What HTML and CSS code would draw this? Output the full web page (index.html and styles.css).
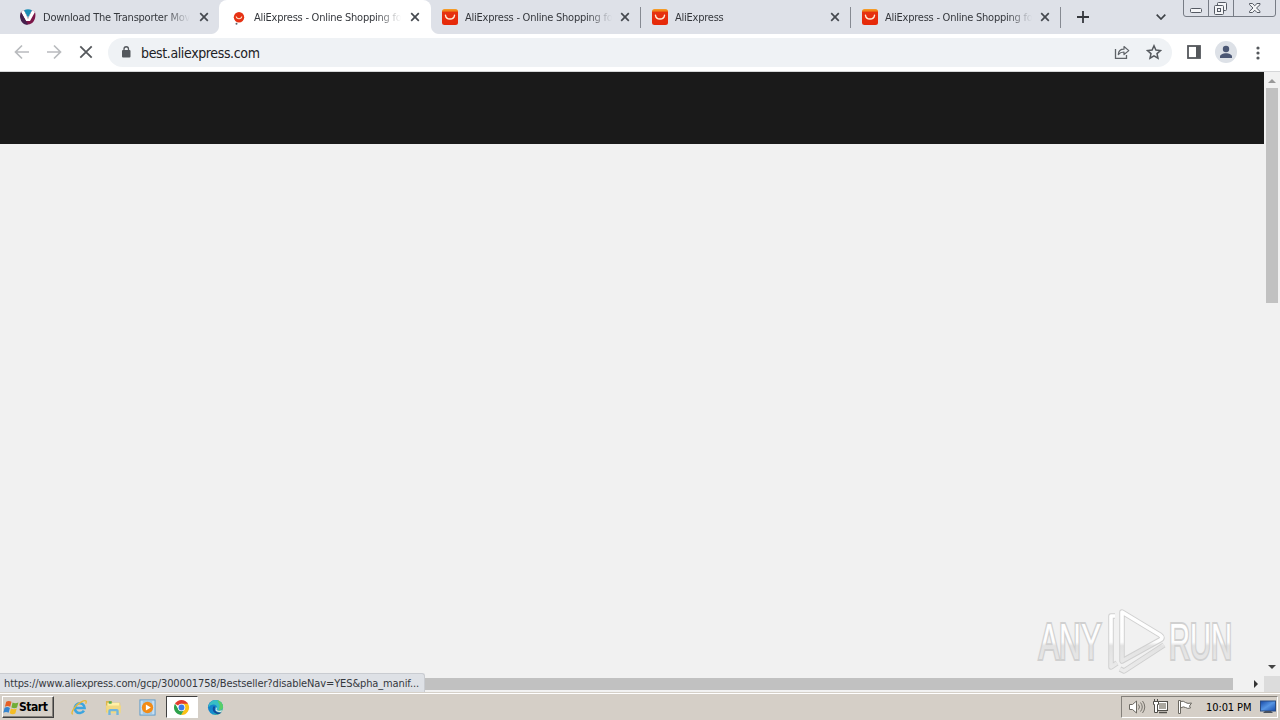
FILE: index.html
```html
<!DOCTYPE html>
<html lang="en">
<head>
  <meta charset="UTF-8">
  <title>AliExpress - Online Shopping</title>
  <link rel="stylesheet" href="styles.css">
</head>
<body>
  <svg width="0" height="0" class="defs">
    <defs>
      <linearGradient id="aliRed" x2="0" y2="1"><stop offset="0" stop-color="#f7a52a"/><stop offset=".14" stop-color="#ee7416"/><stop offset=".2" stop-color="#e63210"/><stop offset="1" stop-color="#e62808"/></linearGradient>
      <linearGradient id="edge" x2="1" y2="1"><stop offset="0" stop-color="#1473c6"/><stop offset=".6" stop-color="#1290d0"/><stop offset="1" stop-color="#56cf65"/></linearGradient>
      <linearGradient id="screen" x2="1" y2="1"><stop offset="0" stop-color="#1547a5"/><stop offset=".5" stop-color="#5796e4"/><stop offset="1" stop-color="#174bab"/></linearGradient>
      <linearGradient id="mark" gradientUnits="userSpaceOnUse" x1="0" y1="5" x2="0" y2="65"><stop offset="0" stop-color="#fff"/><stop offset=".52" stop-color="#fdfdfd"/><stop offset=".58" stop-color="#e2e2e2"/><stop offset="1" stop-color="#ebebeb"/></linearGradient>
      <symbol id="ali" viewBox="0 0 16 16"><rect width="16" height="16" rx="2.5" fill="url(#aliRed)"/><path d="M3.500 6.300c.8 5 8.200 5 9 0" fill="none" stroke="#fff0dc" stroke-width="1.400" stroke-linecap="round"/></symbol>
      <symbol id="x" viewBox="0 0 10 10"><path d="M1.200 1.200l7.600 7.600M8.800 1.200L1.200 8.800" stroke="#45494f" stroke-width="1.700"/></symbol>
    </defs>
  </svg>

  <div class="tabs">
    <div class="tab first">
      <svg class="fav" viewBox="0 0 16 16"><path d="M1 3C-.5 8 2 15.500 8 15.500S16.500 8 15 3L12 1 8 10 4 1z" fill="#7b1648"/><path d="M1 3l3-2 4 9 4-9 3 2-5 9H6z" fill="#fff"/><path d="M4 1.300Q8-1 12 1.300L8 8.500z" fill="#1b8db5"/><path d="M1 3L0 7q0 5 4 8 2 1 4 .5L6 12z" fill="#45204d"/></svg>
      <span class="title">Download The Transporter Mov</span>
      <svg class="close"><use href="#x"/></svg>
    </div>
    <div class="tab active">
      <svg class="fav" viewBox="0 0 16 16"><circle cx="8" cy="8.300" r="5.200" fill="#e63214"/><path d="M5.200 7.500c.5 3 5.100 3 5.600 0" fill="none" stroke="#ffe3c8" stroke-width="1.100"/><circle cx="5.500" cy="14.800" r="1" fill="#59636e"/></svg>
      <span class="title">AliExpress - Online Shopping fo</span>
      <svg class="close"><use href="#x"/></svg>
    </div>
    <div class="tab sep after">
      <svg class="fav"><use href="#ali"/></svg>
      <span class="title">AliExpress - Online Shopping fo</span>
      <svg class="close"><use href="#x"/></svg>
    </div>
    <div class="tab sep">
      <svg class="fav"><use href="#ali"/></svg>
      <span class="title">AliExpress</span>
      <svg class="close"><use href="#x"/></svg>
    </div>
    <div class="tab sep">
      <svg class="fav"><use href="#ali"/></svg>
      <span class="title">AliExpress - Online Shopping fo</span>
      <svg class="close"><use href="#x"/></svg>
    </div>
    <svg class="plus" viewBox="0 0 12 12"><path d="M6 0v12M0 6h12" stroke="#35383d" stroke-width="1.800"/></svg>
    <svg class="chevron" viewBox="0 0 10 6"><path d="M.7.700L5 5 9.300.7" fill="none" stroke="#3e4247" stroke-width="1.700"/></svg>
    <svg class="winbtns" viewBox="0 0 94 17">
      <path d="M.5 0v14q0 2.500 2.500 2.500h87q2.500 0 2.500-2.500V0M25.500 0v16.500M50.500 0v16.500" fill="none" stroke="#777c85"/>
      <g fill="#f4f5f7" stroke="#555a63">
        <rect x="7.500" y="8.500" width="11" height="4" rx="1"/>
        <rect x="34.500" y="2.500" width="9" height="8" rx="1"/>
        <rect x="31.500" y="5.500" width="9" height="9" rx="1"/>
        <rect x="34.500" y="8.500" width="3" height="3"/>
        <path d="M66.500 3.500h3l2.200 2.300 2.300-2.300h3v1.200L73.500 8l3.500 3.300v1.200h-3l-2.300-2.300-2.200 2.300h-3v-1.200L70 8l-3.500-3.300z"/>
      </g>
    </svg>
  </div>

  <div class="toolbar">
    <svg class="nav" viewBox="0 0 16 16"><path d="M15 8H2M8 1.500L1.500 8 8 14.500" fill="none" stroke="#b9bbbe" stroke-width="1.700"/></svg>
    <svg class="nav" viewBox="0 0 16 16"><path d="M1 8h13M8 1.500L14.500 8 8 14.500" fill="none" stroke="#b9bbbe" stroke-width="1.700"/></svg>
    <svg class="nav" viewBox="0 0 16 16"><path d="M2.300 2.300l11.400 11.400M13.700 2.300L2.300 13.700" stroke="#55585c" stroke-width="1.800"/></svg>
    <div class="omnibox">
      <svg class="lock" viewBox="0 0 10 12"><rect x="1" y="4" width="8.500" height="7.500" rx="1" fill="#54585d"/><path d="M3 4.500V3a2.250 2.250 0 0 1 4.500 0v1.500" fill="none" stroke="#54585d" stroke-width="1.300"/></svg>
      <span class="url">best.aliexpress.com</span>
      <svg class="share" viewBox="0 0 16 14"><path d="M1.500 4v9.300h11V10" fill="none" stroke="#5f6368" stroke-width="1.300"/><path d="M4.300 9.500C4.500 6 7 4.200 10 4.200V1.500L14.800 5.600 10 9.500V7C7.500 7 5.800 7.700 4.300 9.500z" fill="none" stroke="#5f6368" stroke-width="1.200" stroke-linejoin="round"/></svg>
      <svg class="star" viewBox="0 0 16 16"><path d="M8 1.800l1.900 4.300 4.600.4-3.500 3.100 1 4.600L8 11.800l-4 2.400 1-4.600L1.500 6.500l4.600-.4z" fill="none" stroke="#55595e" stroke-width="1.500"/></svg>
    </div>
    <svg class="panel" viewBox="0 0 14 14"><rect x="1" y="1" width="12" height="12" fill="#fff" stroke="#54575b" stroke-width="1.800"/><path d="M9 1h4v12H9z" fill="#54575b"/></svg>
    <svg class="avatar" viewBox="0 0 22 22"><circle cx="11" cy="11" r="11" fill="#dde1e7"/><circle cx="11" cy="8" r="3.200" fill="#4b5774"/><path d="M5 17v-1.500c0-2 3-3.300 6-3.300s6 1.300 6 3.300V17z" fill="#4b5774"/></svg>
    <svg class="dots" viewBox="0 0 4 14"><g fill="#55585c"><circle cx="2" cy="2" r="1.600"/><circle cx="2" cy="7" r="1.600"/><circle cx="2" cy="12" r="1.600"/></g></svg>
  </div>

  <div class="page">
    <div class="content">
      <div class="header"></div>
      <svg class="watermark" viewBox="0 0 210 70">
        <g fill="none" stroke="#d0d0d0" stroke-width="5.500" stroke-linejoin="round">
          <path d="M92 6l38 23q4 3 0 5L92 55z"/><path d="M85 10h-4v51l6-4M90 63l4 2 40-26"/>
        </g>
        <g fill="none" stroke="url(#mark)" stroke-width="3.600" stroke-linejoin="round">
          <path d="M92 6l38 23q4 3 0 5L92 55z"/><path d="M85 10h-4v51l6-4M90 63l4 2 40-26"/>
        </g>
        <text class="mark" x="9" y="53" textLength="62" lengthAdjust="spacingAndGlyphs">ANY</text>
        <text class="mark" x="139" y="53" textLength="63" lengthAdjust="spacingAndGlyphs">RUN</text>
      </svg>
      <div class="status">https://www.aliexpress.com/gcp/300001758/Bestseller?disableNav=YES&amp;pha_manif...</div>
    </div>
    <div class="vbar">
      <svg viewBox="0 0 16 16"><path d="M4 11l4-4 4 4z" fill="#999"/></svg>
      <div class="vthumb"></div>
      <svg class="down" viewBox="0 0 16 16"><path d="M4 5l4 4 4-4z" fill="#444"/></svg>
    </div>
    <div class="hbar">
      <div class="hthumb"></div>
      <svg viewBox="0 0 16 16"><path d="M6 4l4 4-4 4z" fill="#333"/></svg>
    </div>
    <div class="corner"></div>
  </div>

  <div class="taskbar">
    <div class="start">
      <svg viewBox="0 0 16 14"><path d="M3 1.500q2.500-1.500 5 .2L6.800 6.300q-2.500-1.500-5 0z" fill="#e66026"/><path d="M9 2.300q2.500 1.500 5.500 0L13.200 7q-2.500 1.400-5.300-.1z" fill="#71ad35"/><path d="M1.500 7.300q2.500-1.500 5 .1L5.300 12Q3 10.500.3 12z" fill="#3685cf"/><path d="M7.500 8q2.500 1.500 5.400 0l-1.300 4.700q-2.600 1.400-5.300-.2z" fill="#f5bd25"/></svg>
      Start
    </div>
    <div class="quick">
      <svg viewBox="0 0 18 18"><path d="M13.700 12.300A5.200 5.200 0 1 1 14.400 9.500H5" fill="none" stroke="#3ca5df" stroke-width="2.700"/><path d="M2 15.500C-1 17 3 7 11 3c5-2.500 6-1 4.500 2" fill="none" stroke="#e8b936" stroke-width="1.400"/></svg>
    </div>
    <div class="quick">
      <svg viewBox="0 0 18 18"><path d="M1 2h6l1 2h8v10H1z" fill="#dcb64d"/><path d="M2.500 4h13v7h-13z" fill="#fff0a8"/><path d="M4 2.500h3V5H4z" fill="#49ad58"/><path d="M1 7h16l-.5 8h-15z" fill="#f2d982"/><path d="M3.500 17v-4.500q0-2 2-2h7q2 0 2 2V17H12v-4H6v4z" fill="#70b5de"/></svg>
    </div>
    <div class="quick">
      <svg viewBox="0 0 18 18"><rect x="1" y="1" width="16" height="16" fill="#c9def0" stroke="#5a9acb"/><rect x="4" y="2" width="10" height="14" fill="#a5cae5"/><circle cx="9" cy="9" r="6" fill="#f28b16"/><path d="M7.300 5.700L12.500 9l-5.200 3.300z" fill="#fff"/></svg>
    </div>
    <div class="quick pressed">
      <svg viewBox="0 0 18 18"><path d="M9 9L2.100 5A8 8 0 0 1 15.900 5z" fill="#e33b2e"/><path d="M15.900 5A8 8 0 0 1 8.500 17L12 10 9 5z" fill="#fbc116"/><path d="M2.100 5A8 8 0 0 0 8.500 17L12 11 6 11z" fill="#2da14b"/><circle cx="9" cy="9" r="4" fill="#fff"/><circle cx="9" cy="9" r="3.100" fill="#3d7be8"/></svg>
    </div>
    <div class="quick">
      <svg viewBox="0 0 18 18"><circle cx="9" cy="9" r="8" fill="url(#edge)"/><path d="M2 6Q5 0 11 1.300q6 1.500 6 7.500-.5 3-4.500 3-3 0-2-2 .5-4-4-4Q3.500 6 1.500 9z" fill="#37bec4"/><path d="M11 1.300q6 1.500 6 7.500-.5 3-4.500 3l1-5z" fill="#58ce68"/><path d="M6.500 8q-2 6 4 8 3 .5 5-2-5 1.500-7-2-.8-2 .3-4z" fill="#124b9c"/><path d="M9.500 8.500q1.500 1.500.7 2.800Q11.500 13 16 12l-1 2q-5 0-6-2z" fill="#d8e8e8"/></svg>
    </div>
    <div class="tray">
      <svg viewBox="0 0 18 16"><path d="M1.500 5.500h3L8.500 2v12l-4-3.500h-3z" fill="#fff" stroke="#6c6962"/><path d="M10.500 5.500q2 2.500 0 5M12.500 3.500q3.500 4.500 0 9M14.500 2q4.500 6 0 12" fill="none" stroke="#77736c"/></svg>
      <svg viewBox="0 0 18 16"><rect x="5.500" y="2.500" width="10" height="9" fill="#aaa79f" stroke="#504e49"/><path d="M6.500 3.500h8v7h-8z" fill="none" stroke="#fff"/><path d="M7 13.500h8" stroke="#504e49" stroke-width="1.500"/><path d="M2.500 0v3M5.500 0v3M1.500 2.500h5v3h-1v8h-3v-8h-1z" fill="#fff" stroke="#504e49"/></svg>
      <svg viewBox="0 0 18 16"><path d="M2.500 1.500h2v13h-2z" fill="#fff" stroke="#6b6861"/><path d="M4.500 2.500q3-1 5 1 2 1.500 6 .5l-2 3 1 2q-3 1-5-.5t-5 .5z" fill="#fff" stroke="#6b6861"/></svg>
      <span class="clock">10:01 PM</span>
      <svg class="desk" viewBox="0 0 16 14"><rect x=".5" y="1" width="15" height="10" fill="url(#screen)" stroke="#2b4c82"/><path d="M3 13h10l-2-2H5z" fill="#49525f"/></svg>
    </div>
  </div>
</body>
</html>
```
FILE: styles.css
```css
body { margin: 0; width: 1280px; height: 720px; overflow: hidden; display: flex; flex-direction: column; background: #f1f1f1; font: 11px "DejaVu Sans Condensed", "DejaVu Sans", sans-serif; font-stretch: condensed; color: #35383d; }
svg { display: block; flex: none; }
.defs { position: absolute; }

/* tab strip */
.tabs { height: 34px; flex: none; display: flex; background: #dee1e8; }
.tab { width: 210px; height: 34px; box-sizing: border-box; padding: 0 10px 0 11px; display: flex; align-items: center; flex: none; }
.first { width: 219px; padding: 0 10px 0 20px; background: radial-gradient(circle at 0 0, #dee1e8 7.500px, #fff 8.500px) right bottom / 8px 8px no-repeat; }
.active { width: 212px; padding-left: 12px; background: #fff; border-radius: 8px 8px 0 0; }
.after { background: radial-gradient(circle at 8px 0, #dee1e8 7.500px, #fff 8.500px) left bottom / 8px 8px no-repeat; }
.sep { border-right: 1px solid; border-image: linear-gradient(transparent 8px, #868a92 8px, #868a92 27px, transparent 27px) 1; }
.fav { width: 16px; height: 16px; }
.title { width: 148px; margin-left: 7px; white-space: nowrap; line-height: 16px; padding-top: 1px; letter-spacing: -0.24px; -webkit-mask-image: linear-gradient(to right, #000 122px, transparent 147px); }
.close { width: 10px; height: 10px; margin-left: 8px; }
.sep .close { margin-left: 7px; }
.plus { width: 12px; height: 12px; margin: 11px 0 0 16px; }
.chevron { width: 10px; height: 6px; margin: 14px 0 0 67px; }
.winbtns { width: 94px; height: 17px; margin-left: 17px; }

/* toolbar */
.toolbar { height: 38px; box-sizing: border-box; flex: none; display: flex; align-items: center; padding-left: 14px; background: #fff; border-bottom: 1px solid #d5d6d8; }
.nav { width: 16px; height: 16px; margin: 0 16px 1px 0; }
.omnibox { width: 1064px; height: 29px; margin-left: -2px; border-radius: 15px; background: #eff2f5; display: flex; align-items: center; box-sizing: border-box; padding: 0 10px 0 13px; }
.lock { width: 10px; height: 12px; margin-bottom: 2px; }
.url { margin-left: 10px; flex: 1; font-size: 14px; letter-spacing: -0.37px; color: #202124; }
.share { width: 16px; height: 14px; margin: 0 16px 1px 0; }
.star { width: 16px; height: 16px; margin-bottom: 1px; }
.panel { width: 14px; height: 14px; margin: 0 0 1px 15px; }
.avatar { width: 22px; height: 22px; margin: 0 0 1px 14px; }
.dots { width: 4px; height: 14px; margin-left: 19px; }

/* page area and scrollbars */
.page { height: 620px; flex: none; display: grid; grid-template-columns: 1264px 16px; grid-template-rows: 604px 16px; }
.content { position: relative; }
.header { height: 72px; background: #1a1a1a; }
.watermark { position: absolute; left: 1030px; top: 534px; width: 210px; height: 70px; }
.mark { font: 50px "Liberation Sans Narrow", "Liberation Sans", sans-serif; fill: url(#mark); stroke: #d0d0d0; stroke-width: 4px; paint-order: stroke; }
.status { position: absolute; left: 0; top: 601px; z-index: 1; width: 425px; height: 19px; box-sizing: border-box; padding-left: 4px; line-height: 19px; letter-spacing: -0.12px; background: #dee1e6; border: solid #c9ccd1; border-width: 1px 1px 0 0; border-radius: 0 3px 0 0; white-space: nowrap; }
.vbar { background: #f1f1f1; display: flex; flex-direction: column; }
.vbar svg, .hbar svg { width: 16px; height: 16px; }
.vthumb { height: 215px; margin: 0 2px; background: #c1c1c1; }
.down { margin-top: auto; }
.hbar { display: flex; background: #f1f1f1; }
.hthumb { width: 1217px; height: 12px; margin: 2px 15px 0 16px; background: #c1c1c1; }
.corner { background: #dcdcdc; }

/* taskbar */
.taskbar { height: 28px; flex: none; box-sizing: border-box; border-top: 1px solid #d5d0c8; box-shadow: inset 0 1px #fff; background: #d5cfc7; display: flex; align-items: center; padding: 1px 2px 0; }
.start { width: 52px; height: 22px; margin-right: 10px; box-sizing: border-box; border: 1px solid; border-color: #fff #404040 #404040 #fff; box-shadow: inset -1px -1px #85817b; display: flex; align-items: center; font-size: 12px; font-weight: bold; color: #000; letter-spacing: -0.45px; }
.start svg { width: 17px; height: 15px; margin-right: -1px; }
.quick { width: 32px; height: 22px; margin-right: 2px; display: flex; align-items: center; justify-content: center; }
.quick svg { width: 17px; height: 17px; margin-right: 1px; }
.pressed { box-sizing: border-box; border: 1px solid; border-color: #404040 #fff #fff #404040; background: #fff; }
.tray { width: 157px; height: 22px; margin-left: auto; box-sizing: border-box; border: 1px solid; border-color: #85817b #fff #fff #85817b; display: flex; align-items: center; padding-left: 6px; color: #000; }
.tray svg { width: 18px; height: 16px; margin-right: 6px; }
.clock { margin-left: 6px; width: 49px; white-space: nowrap; letter-spacing: -0.1px; }
.tray .desk { width: 16px; height: 14px; margin: 0 0 0 5px; }
```
